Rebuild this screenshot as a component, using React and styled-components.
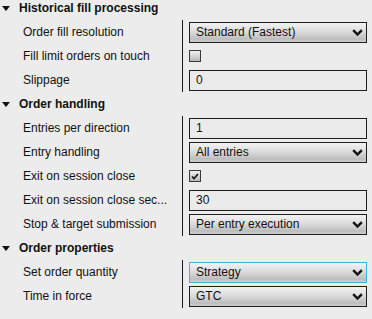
import React from "react";
import styled, { createGlobalStyle } from "styled-components";

const GlobalStyle = createGlobalStyle`
  html, body {
    margin: 0;
    background: #ececec;
  }
  body {
    font-family: "Liberation Sans", Arial, sans-serif;
    font-size: 12px;
    color: #111;
    overflow: hidden;
  }
`;

const sections = [
  {
    title: "Historical fill processing",
    rows: [
      { label: "Order fill resolution", type: "select", value: "Standard (Fastest)" },
      { label: "Fill limit orders on touch", type: "check", value: false },
      { label: "Slippage", type: "input", value: "0" },
    ],
  },
  {
    title: "Order handling",
    rows: [
      { label: "Entries per direction", type: "input", value: "1" },
      { label: "Entry handling", type: "select", value: "All entries" },
      { label: "Exit on session close", type: "check", value: true },
      { label: "Exit on session close sec...", type: "input", value: "30" },
      { label: "Stop & target submission", type: "select", value: "Per entry execution" },
    ],
  },
  {
    title: "Order properties",
    rows: [
      { label: "Set order quantity", type: "select", value: "Strategy", focused: true },
      { label: "Time in force", type: "select", value: "GTC" },
    ],
  },
];

const Panel = styled.div`
  width: 372px;
  margin-top: -4px;
`;

const Header = styled.div`
  height: 24px;
  display: flex;
  align-items: center;
  padding-left: 2px;
  font-weight: bold;

  svg {
    margin-right: 9px;
  }
`;

const Row = styled.div`
  height: 24px;
  display: flex;
`;

const Label = styled.div`
  width: 182px;
  box-sizing: border-box;
  padding-left: 23px;
  display: flex;
  align-items: center;
  white-space: nowrap;
  overflow: hidden;
`;

const Value = styled.div`
  flex: 1;
  border-left: 1px solid #1a1a1a;
  padding: 0 5px 0 6px;
  display: flex;
  align-items: center;
`;

const TextInput = styled.div`
  width: 100%;
  height: 21px;
  box-sizing: border-box;
  border: 1px solid #1e1e1e;
  background: #ebebeb;
  padding: 0 6px;
  display: flex;
  align-items: center;
`;

const Select = styled.div`
  width: 100%;
  height: 21px;
  box-sizing: border-box;
  border: 1px solid ${(p) => (p.$focused ? "#3cb4dc" : "#1e1e1e")};
  background: linear-gradient(#f3f3f3 0%, #dcdcdc 45%, #bdbdbd 85%, #cfcfcf 100%);
  padding: 0 3px 0 6px;
  display: flex;
  align-items: center;
  justify-content: space-between;
`;

const Check = styled.span`
  width: 12px;
  height: 12px;
  box-sizing: border-box;
  border: 1px solid #3a3a3a;
  background: linear-gradient(#f0f0f0, #b8b8b8);
  display: flex;
  align-items: center;
  justify-content: center;
`;

const Arrow = () => (
  <svg width="8" height="5" viewBox="0 0 8 5">
    <polygon points="0,0 8,0 4,5" fill="#111" />
  </svg>
);

const Chevron = () => (
  <svg width="11" height="7" viewBox="0 0 11 7">
    <polyline points="1.2,1.2 5.5,5.5 9.8,1.2" fill="none" stroke="#111" strokeWidth="2.4" />
  </svg>
);

const Tick = () => (
  <svg width="8" height="7" viewBox="0 0 8 7">
    <polyline points="1,3.5 3,5.5 7,1" fill="none" stroke="#111" strokeWidth="1.6" />
  </svg>
);

const Control = ({ row }) => {
  if (row.type === "select")
    return (
      <Select $focused={row.focused}>
        <span>{row.value}</span>
        <Chevron />
      </Select>
    );
  if (row.type === "check") return <Check>{row.value && <Tick />}</Check>;
  return <TextInput>{row.value}</TextInput>;
};

const App = () => {
  return (
    <>
      <GlobalStyle />
      <Panel>
        {sections.map((section) => (
          <div key={section.title}>
            <Header>
              <Arrow />
              {section.title}
            </Header>
            {section.rows.map((row) => (
              <Row key={row.label}>
                <Label>{row.label}</Label>
                <Value>
                  <Control row={row} />
                </Value>
              </Row>
            ))}
          </div>
        ))}
      </Panel>
    </>
  );
};

export default App;
